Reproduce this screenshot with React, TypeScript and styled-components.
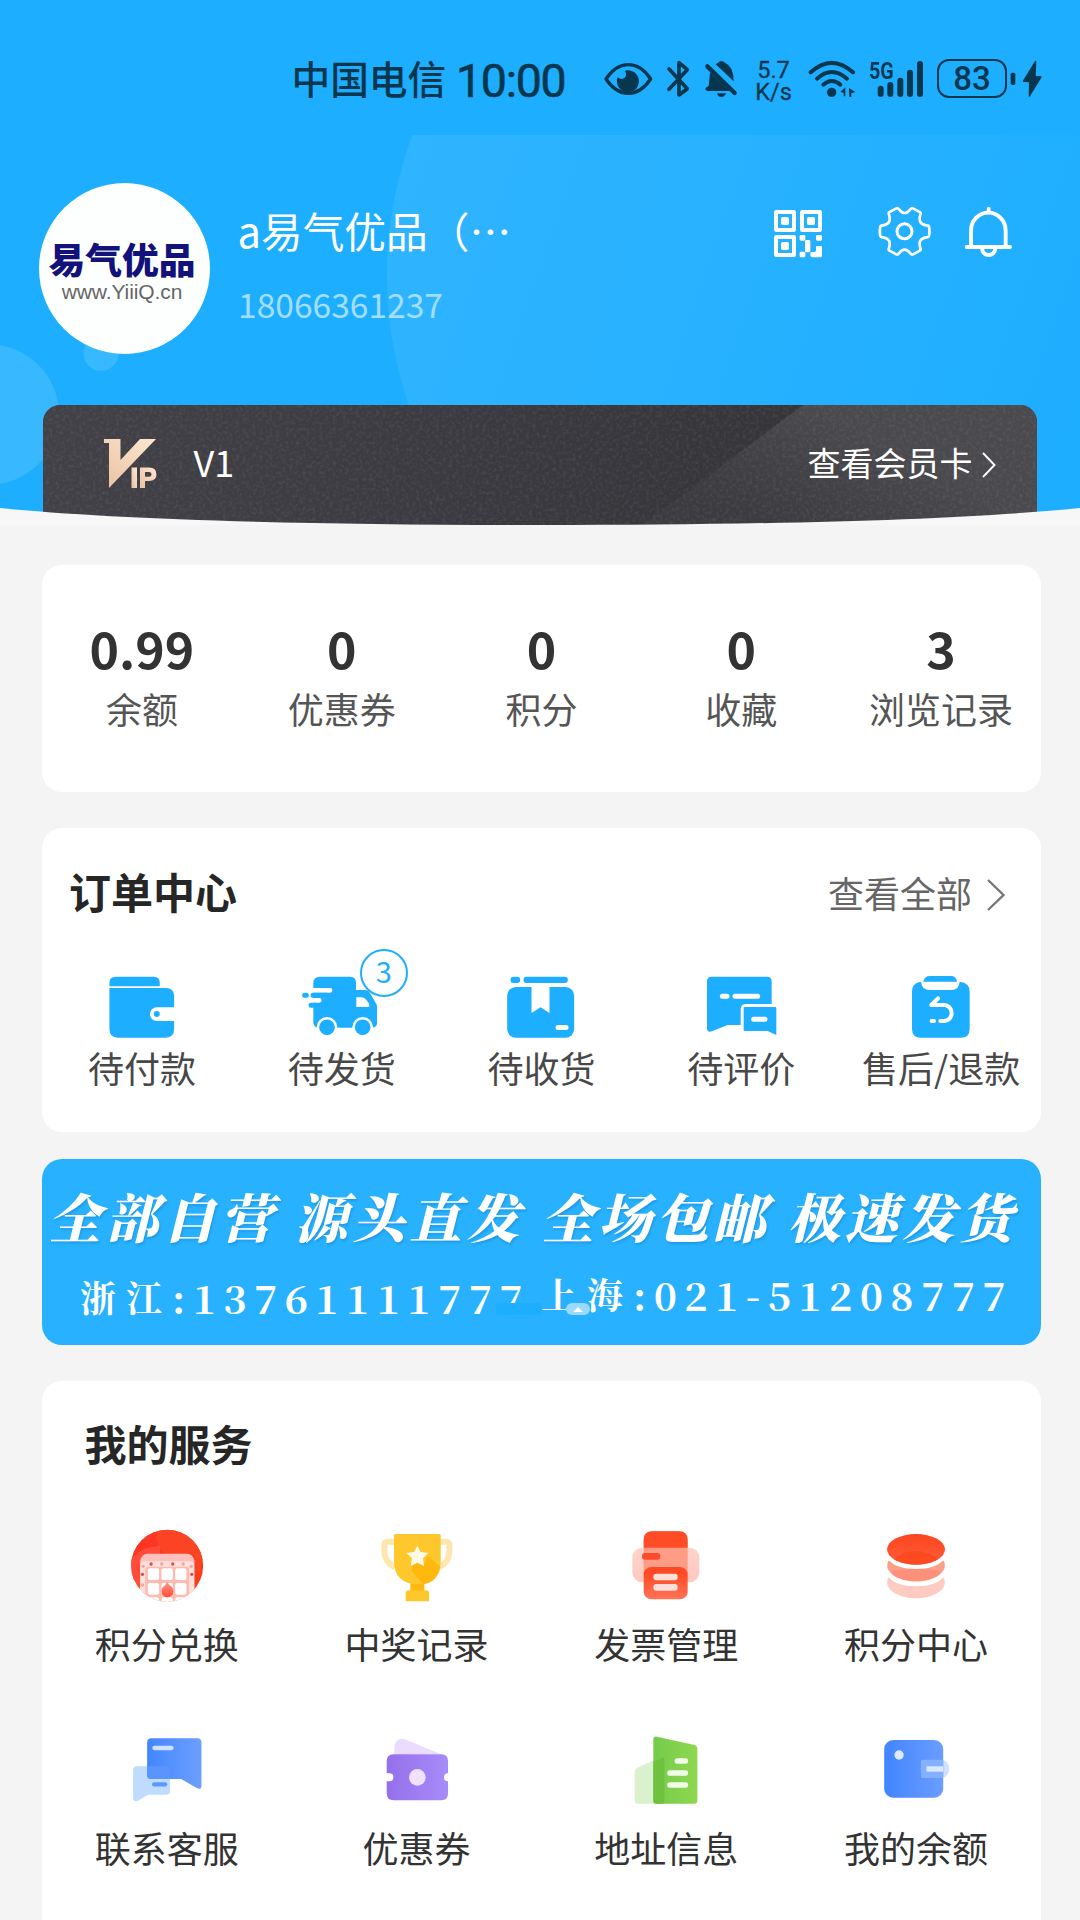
import React from "react";
import styled, { createGlobalStyle } from "styled-components";

const BLUE = "#1eaeff";
const INK = "#07364f";

const GlobalStyle = createGlobalStyle`
  * { box-sizing: border-box; }
  body {
    margin: 0;
    background: #f4f4f4;
    font-family: "Noto Sans CJK SC", "Noto Sans", sans-serif;
  }
`;

const Page = styled.main`
  width: 1080px;
  height: 1920px;
  overflow: hidden;
  background: #f4f4f4;
  display: flex;
  flex-direction: column;
`;

const Header = styled.header`
  position: relative;
  flex: none;
  height: 525px;
  background: ${BLUE};
  display: flex;
  flex-direction: column;
`;

const Backdrop = styled.svg`
  position: absolute;
  left: 0;
  top: 0;
`;

const Curve = styled.svg`
  position: absolute;
  left: 0;
  bottom: 0;
`;

const StatusBar = styled.div`
  position: relative;
  height: 135px;
  padding: 58px 0 0 291.5px;
  display: flex;
  align-items: flex-start;
  color: ${INK};
  white-space: nowrap;
`;

const Glyph = styled.svg<{ $ml?: number }>`
  display: block;
  flex: none;
  margin-left: ${(p) => p.$ml ?? 0}px;
`;

const Carrier = styled.div`
  width: 164.5px;
  margin-top: -4px;
  font-size: 38.7px;
  line-height: 46px;
  font-weight: 500;
`;

const Clock = styled.div`
  width: 147px;
  margin-top: -1px;
  font-family: Roboto, sans-serif;
  font-size: 46.5px;
  line-height: 48px;
  letter-spacing: -1.3px;
  -webkit-text-stroke: 0.6px ${INK};
`;

const Speed = styled.div`
  width: 37px;
  margin-left: 17px;
  padding-top: 1px;
  font-family: Roboto, sans-serif;
  font-size: 23.5px;
  line-height: 22px;
  text-align: center;
  -webkit-text-stroke: 0.3px ${INK};
`;

const Network = styled.div`
  position: relative;
  width: 54px;
  margin-left: 13.5px;
`;

const NetworkKind = styled.span`
  position: absolute;
  left: -0.5px;
  top: 2px;
  font-family: Roboto, sans-serif;
  font-weight: 700;
  font-size: 24px;
  line-height: 22px;
  transform: scaleX(0.82);
  transform-origin: left top;
`;

const Battery = styled.div`
  width: 70px;
  height: 39px;
  margin: 1px 0 0 13.5px;
  border: 2.6px solid ${INK};
  border-radius: 12px;
  font-family: Roboto, sans-serif;
  font-weight: 500;
  font-size: 33px;
  line-height: 36px;
  text-align: center;
`;

const Profile = styled.div`
  position: relative;
  height: 270px;
  padding: 48px 0 0 39px;
  display: flex;
  align-items: flex-start;
`;

const Avatar = styled.div`
  width: 171px;
  height: 171px;
  border-radius: 50%;
  background: #fdffff;
  display: flex;
  flex-direction: column;
  align-items: center;
  padding-top: 53px;
  white-space: nowrap;
`;

const AvatarName = styled.div`
  font-size: 36.8px;
  line-height: 44px;
  font-weight: 900;
  color: #12127a;
  margin-left: -5px;
`;

const AvatarSite = styled.div`
  font-family: "Liberation Sans", sans-serif;
  font-size: 21px;
  line-height: 23px;
  color: #666;
  margin-left: -5px;
  letter-spacing: -0.1px;
`;

const Identity = styled.div`
  width: 534.5px;
  margin-left: 27.5px;
  padding-top: 19px;
`;

const UserName = styled.div`
  font-size: 41.7px;
  line-height: 56px;
  color: #fff;
`;

const Phone = styled.div`
  margin-top: 23.5px;
  padding-left: 0.5px;
  font-size: 33.6px;
  line-height: 44px;
  color: #a3defe;
`;

const Actions = styled.div`
  display: flex;
  margin-left: -0.5px;
  padding-top: 23px;
`;

const VipCard = styled.div`
  position: relative;
  width: 993.5px;
  height: 120px;
  margin-left: 43px;
  padding: 34px 41px 0 60.5px;
  border-radius: 17px 17px 0 0;
  overflow: hidden;
  background: linear-gradient(100deg, #424147 0%, #3c3b41 35%, #36353a 72%);
  display: flex;
  align-items: flex-start;
  color: #fff;
`;

const VipLevel = styled.div`
  position: relative;
  flex: 1;
  margin-left: 36px;
  font-size: 36px;
  line-height: 44px;
`;

const VipLink = styled.div`
  position: relative;
  display: flex;
  align-items: center;
  gap: 9px;
  padding-top: 1px;
  font-size: 33px;
  line-height: 44px;
`;

const Chevron = styled.svg`
  display: block;
  flex: none;
  margin-top: 5px;
`;

const Card = styled.section<{ $height: number; $gap: number }>`
  flex: none;
  width: 999px;
  height: ${(p) => p.$height}px;
  margin: ${(p) => p.$gap}px 0 0 42px;
  border-radius: 20px;
  background: #fff;
`;

const StatRow = styled.div`
  display: grid;
  grid-template-columns: repeat(5, 1fr);
  padding-top: 57px;
  text-align: center;
  white-space: nowrap;
`;

const StatValue = styled.div`
  font-size: 50px;
  line-height: 50px;
  font-weight: 700;
  color: #333;
`;

const StatLabel = styled.div`
  margin-top: 14.5px;
  font-size: 36px;
  line-height: 44px;
  color: #555;
`;

const CardHead = styled.div<{ $left: number; $top: number }>`
  display: flex;
  justify-content: space-between;
  align-items: flex-start;
  padding: ${(p) => p.$top}px 35px 0 ${(p) => p.$left}px;
  height: 90px;
`;

const Title = styled.h2`
  margin: 0;
  font-size: 42px;
  line-height: 56px;
  font-weight: 700;
  color: #262626;
`;

const More = styled.div`
  display: flex;
  align-items: center;
  gap: 14px;
  padding-top: 7px;
  font-size: 36px;
  line-height: 44px;
  color: #666;
`;

const OrderRow = styled.div`
  display: grid;
  grid-template-columns: repeat(5, 1fr);
  margin-top: 52px;
`;

const Entry = styled.div<{ $gap: number; $color: string }>`
  display: flex;
  flex-direction: column;
  align-items: center;
  gap: ${(p) => p.$gap}px;
  font-size: 36px;
  line-height: 44px;
  color: ${(p) => p.$color};
  white-space: nowrap;
`;

const IconBox = styled.div`
  position: relative;
`;

const Badge = styled.span`
  position: absolute;
  left: 58px;
  top: -21px;
  width: 48px;
  height: 48px;
  border: 2px solid ${BLUE};
  border-radius: 50%;
  background: #fff;
  color: ${BLUE};
  font-size: 29px;
  line-height: 39px;
  text-align: center;
`;

const Banner = styled.section`
  position: relative;
  flex: none;
  width: 999px;
  height: 186px;
  margin: 27px 0 0 42px;
  border-radius: 20px;
  background: #27b1fe;
  color: #fff;
  font-family: "Noto Serif CJK SC", "Noto Sans CJK SC", "Liberation Serif", serif;
  font-weight: 700;
  white-space: nowrap;
`;

const Slogans = styled.div`
  display: grid;
  grid-template-columns: repeat(4, 246.5px);
  padding: 24.5px 0 0 6px;
  font-size: 53px;
  line-height: 62px;
  font-weight: 900;
  font-style: italic;
  letter-spacing: 4.3px;
  text-shadow: 1px 2px 2px rgba(20, 110, 190, 0.35);
`;

const Hotlines = styled.div`
  display: flex;
  padding: 18.5px 0 0 38px;
`;

const Hotline = styled.div<{ $width: number; $lift: number }>`
  display: flex;
  width: ${(p) => p.$width}px;
  height: 60px;
  margin-top: ${(p) => p.$lift}px;
  font-size: 36px;
  line-height: 60px;
  letter-spacing: 10px;
`;

const Digits = styled.span`
  font-size: 39.5px;
  font-weight: 700;
  letter-spacing: 7.4px;
`;

const Mask = styled.span`
  position: absolute;
  left: 454px;
  top: 144px;
  width: 46px;
  height: 12px;
  border-radius: 4px;
  background: #1eaeff;
`;

const Pill = styled.span`
  position: absolute;
  left: 524px;
  top: 144px;
  width: 24px;
  height: 12px;
  border-radius: 6px;
  background: #9adafe;
  display: flex;
  align-items: center;
  justify-content: center;
`;

const ServiceGrid = styled.div`
  display: grid;
  grid-template-columns: repeat(4, 1fr);
  grid-auto-rows: 204.7px;
  margin-top: 52.5px;
`;

const EyeIcon = () => (
  <Glyph width="50" height="40" viewBox="970 54 150 120" $ml={0}>
    <path d="M979 117 Q1008 74 1046 74 Q1084 74 1113 117 Q1084 160 1046 160 Q1008 160 979 117Z" fill="none" stroke={INK} strokeWidth="10" strokeLinejoin="round" />
    <path d="M1036 92 A33 33 0 1 1 1014 112 Q1024 121 1034 114 Q1043 106 1036 92Z" fill={INK} />
  </Glyph>
);

const BluetoothIcon = () => (
  <Glyph width="26" height="40" viewBox="-42 54 78 120" $ml={13}>
    <path d="M-33 87 L22 146 L-3 165 V68 L22 89 L-33 148" fill="none" stroke={INK} strokeWidth="11" strokeLinecap="round" strokeLinejoin="round" />
  </Glyph>
);

const MutedBellIcon = () => (
  <Glyph width="34" height="40" viewBox="74 54 102 120" $ml={12}>
    <path d="M92 96 L152 153 H84 Q77 152 78 145 L88 137 Q91 115 92 96Z" fill={INK} />
    <path d="M109 73 Q113 70 116 68 Q126 58 137 68 Q164 80 163 124Z" fill={INK} />
    <path d="M113 160 H140 Q137 171 126 171 Q116 171 113 160Z" fill={INK} />
    <path d="M84 79 L166 159" stroke={INK} strokeWidth="13" strokeLinecap="round" />
  </Glyph>
);

const WifiIcon = () => (
  <Glyph width="48" height="40" viewBox="386 54 144 120" $ml={16}>
    <g fill="none" stroke={INK} strokeWidth="12" strokeLinecap="round">
      <path d="M394 97 Q457 40 521 97" />
      <path d="M413 116 Q457 76 503 116" />
      <path d="M432 134 Q457 112 483 134" />
    </g>
    <circle cx="457" cy="157" r="14" fill={INK} />
    <path d="M483 156 L498 142 V169 H493 V158Z M509 144 L528 156 L516 160 V171 H510Z" fill={INK} />
  </Glyph>
);

const SignalIcon = () => (
  <Glyph width="54" height="40" viewBox="571 54 162 120">
    <g stroke={INK} strokeWidth="18" strokeLinecap="round">
      <path d="M603 146V162M632 135V162M662 122V162M691 98V162M721 72V162" />
    </g>
  </Glyph>
);

const BatteryTail = () => (
  <Glyph width="34" height="40" viewBox="988 54 102 120" $ml={1.5}>
    <rect x="993" y="98" width="14" height="37" rx="5" fill={INK} />
    <path d="M1066 63 Q1070 61 1070 66 L1068 108 L1083 108 Q1088 109 1085 113 L1051 169 Q1047 173 1047 167 L1048 127 L1032 126 Q1027 124 1031 120Z" fill={INK} />
  </Glyph>
);

const QrIcon = () => (
  <Glyph width="52" height="52" viewBox="636 258 156 156">
    <g fill="none" stroke="#fff" strokeWidth="12">
      <rect x="648" y="276" width="54" height="54" rx="1" />
      <rect x="726" y="276" width="54" height="54" rx="1" />
      <rect x="648" y="351" width="54" height="54" rx="1" />
    </g>
    <g fill="#fff">
      <rect x="663" y="291" width="24" height="24" rx="5" />
      <rect x="741" y="291" width="24" height="24" rx="5" />
      <rect x="663" y="366" width="24" height="24" rx="5" />
      <rect x="719" y="345" width="17" height="17" rx="4" />
      <rect x="768" y="345" width="18" height="17" rx="4" />
      <rect x="735" y="360" width="16" height="37" rx="4" />
      <rect x="719" y="395" width="17" height="17" rx="4" />
      <path d="M771 378H783Q786 378 786 381V408Q786 412 782 412H757Q751 412 751 405V399Q751 396 755 396H764Q768 396 768 391V382Q768 378 771 378Z" />
    </g>
  </Glyph>
);

const GearIcon = () => (
  <Glyph width="54" height="52" viewBox="954 258 162 156" $ml={54}>
    <g fill="none" stroke="#fff" strokeWidth="8" strokeLinejoin="round">
      <path d="M1009 265 Q1013 263 1017 268 Q1034 290 1051 268 Q1055 263 1059 265 L1081 277 Q1083 279 1081 284 Q1072 312 1099 316 Q1106 316 1107 320 Q1110 334 1107 348 Q1106 352 1099 352 Q1072 356 1081 384 Q1083 389 1081 391 L1059 403 Q1055 405 1051 400 Q1034 378 1017 400 Q1013 405 1009 403 L987 391 Q985 389 987 384 Q996 356 969 352 Q962 352 961 348 Q958 334 961 320 Q962 316 969 316 Q996 312 987 284 Q985 279 987 277Z" />
      <circle cx="1033.500" cy="334" r="22.500" strokeWidth="9" />
    </g>
  </Glyph>
);

const BellIcon = () => (
  <Glyph width="50" height="52" viewBox="1210 258 150 156" $ml={31.3}>
    <g fill="none" stroke="#fff" strokeWidth="11.500" strokeLinecap="round">
      <path d="M1287 266V276" />
      <path d="M1234 379V332A52 54 0 0 1 1338 332V379" />
      <path d="M1221 381H1351" />
      <path d="M1267 385A20 20 0 0 0 1307 385" />
    </g>
  </Glyph>
);

const VipMark = styled(Glyph)`
  position: relative;
`;

const VipLogo = () => (
  <VipMark width="54" height="50" viewBox="0 0 54 50">
    <defs>
      <linearGradient id="vip" x1="0" y1="1" x2="1" y2="0">
        <stop offset="0" stopColor="#e9c2a3" />
        <stop offset="1" stopColor="#ffe6d0" />
      </linearGradient>
    </defs>
    <g fill="url(#vip)">
      <path d="M0 0H16.500V21L36 0H52L5 49V4H0Z" />
      <path d="M27.500 28.500H33V49H27.500Z" />
      <path fillRule="evenodd" d="M36 28.500H45Q52.500 28.500 52.500 35.500Q52.500 42 45 42H41V49H36ZM41 33V37.800H45Q47.500 37.800 47.500 35.500Q47.500 33 45 33Z" />
    </g>
  </VipMark>
);

const WalletIcon = () => (
  <Glyph width="80" height="70" viewBox="185.700 90 240 210">
    <path d="M208 139V129Q208 110 227 110H341Q359 110 359 128V139Z" fill={BLUE} />
    <path d="M208 144H377Q402 144 402 169V202H350A20.500 20.500 0 0 0 350 243H402V268Q402 293 377 293H233Q208 293 208 268Z" fill={BLUE} />
    <circle cx="350" cy="222" r="9" fill={BLUE} />
  </Glyph>
);

const TruckIcon = () => (
  <Glyph width="80" height="70" viewBox="785 90 240 210">
    <path d="M819 130Q819 110 838 110H930Q947 110 947 128V150H976Q984 150 989 159L1005 187Q1010 194 1010 201V250Q1010 262 996 263H830Q819 258 819 246Z" fill={BLUE} />
    <path d="M948 172H964Q975 172 985 190Q989 198 985 201H948Z" fill="#fff" />
    <g strokeLinecap="round" fill="none">
      <path d="M816 151H869M816 181H837" stroke="#fff" strokeWidth="14" />
      <path d="M818 166H860M812 196H825M793 166H798" stroke={BLUE} strokeWidth="15" />
    </g>
    <circle cx="860" cy="262" r="31" fill="#fff" />
    <circle cx="967" cy="262" r="31" fill="#fff" />
    <path d="M820 264H1015V300H820Z" fill="#fff" />
    <circle cx="860" cy="262" r="23.500" fill={BLUE} />
    <circle cx="967" cy="262" r="23.500" fill={BLUE} />
  </Glyph>
);

const ParcelIcon = () => (
  <Glyph width="80" height="70" viewBox="-115.500 90 240 210">
    <g fill={BLUE}>
      <rect x="-87" y="110" width="29" height="19" rx="9" />
      <rect x="-48" y="110" width="133" height="19" rx="9" />
      <rect x="-97" y="141" width="201" height="152" rx="26" />
    </g>
    <path d="M-24 140H30V219L3 202L-24 219Z" fill="#fff" />
    <rect x="48" y="255" width="39" height="15" rx="7.500" fill="#fff" />
  </Glyph>
);

const ReviewIcon = () => (
  <Glyph width="80" height="70" viewBox="484 90 240 210">
    <path d="M502 124Q502 110 516 110H682Q696 110 696 124V192H620Q603 192 603 208V255H565Q561 255 558 257L517 274Q502 279 502 264Z" fill={BLUE} />
    <path d="M612 205Q612 201 616 201H706Q710 201 710 205V285L684 273H616Q612 273 612 269Z" fill={BLUE} />
    <path d="M548 169H562M586 169H654M642 238H676" stroke="#fff" strokeWidth="15" strokeLinecap="round" />
  </Glyph>
);

const RefundIcon = () => (
  <Glyph width="80" height="70" viewBox="1083 90 240 210">
    <path d="M1143 125Q1145 150 1169 150H1234Q1257 150 1259 125Q1289 128 1289 155V266Q1289 293 1262 293H1143Q1116 293 1116 266V155Q1116 128 1143 125Z" fill={BLUE} />
    <path d="M1150 125Q1153 108 1170 108H1232Q1249 108 1251 125Z" fill={BLUE} />
    <path d="M1194 175L1174 195H1213A22 24 0 0 1 1213 243H1201M1175 243H1182" fill="none" stroke="#fff" strokeWidth="12" strokeLinecap="round" strokeLinejoin="round" />
  </Glyph>
);

const ExchangeIcon = () => (
  <Glyph width="80" height="80" viewBox="200.600 70 240 240">
    <defs>
      <clipPath id="disc"><circle cx="321" cy="195" r="108" /></clipPath>
      <linearGradient id="drop" x1="0" y1="0" x2="0" y2="1">
        <stop offset="0" stopColor="#ff9a8a" /><stop offset="1" stopColor="#ff4a35" />
      </linearGradient>
      <linearGradient id="discFill"><stop offset="0" stopColor="#ff5140" /><stop offset="1" stopColor="#f93b14" /></linearGradient>
    </defs>
    <g clipPath="url(#disc)">
      <rect x="213" y="87" width="216" height="216" fill="url(#discFill)" />
      <path d="M288 80Q288 140 320 162L420 220L440 80Z" fill="#fa4423" />
      <path d="M288 80Q284 136 322 170L213 190V80Z" fill="#fd3524" />
      <path d="M210 180Q240 138 300 135V170L210 250Z" fill="#ff4b3a" />
      <path d="M240 180Q245 159 262 159H381Q397 159 403 180V310H240Z" fill="#fec0bd" />
      <path d="M240 195Q240 182 253 182H389Q402 182 402 195V310H240Z" fill="#ffe0dc" />
      <rect x="255" y="198" width="132" height="120" rx="9" fill="#fdbbb2" />
      <g fill="#fff">
        {[263, 304, 345].map((x) => [203, 247, 290].map((y) => <rect key={`${x}-${y}`} x={x} y={y} width="34" height="35" rx="7" />))}
      </g>
      <path d="M321 243Q326 253 335 259A18 18 0 1 1 309 259Q317 253 321 243Z" fill="url(#drop)" />
      <g fill="#e04a44">
        <circle cx="273" cy="190" r="5" /><circle cx="338" cy="190" r="5" />
        <circle cx="247" cy="221" r="5" /><circle cx="395" cy="221" r="5" />
      </g>
      <g fill="#f6a39e">
        <circle cx="305" cy="190" r="5" /><circle cx="369" cy="190" r="5" /><circle cx="249" cy="197" r="5" />
        <circle cx="393" cy="197" r="5" /><circle cx="247" cy="253" r="5" />
      </g>
    </g>
  </Glyph>
);

const TrophyIcon = () => (
  <Glyph width="80" height="80" viewBox="949.900 70 240 240">
    <path d="M1004 123H981Q972 123 972 134V151Q972 184 1004 200M1137 123H1158Q1167 123 1167 134V151Q1167 184 1137 200" fill="none" stroke="#ffe6ae" strokeWidth="18" />
    <path d="M1050 240H1092V275H1050Z" fill="#ffb90e" />
    <path d="M1001 105Q1001 100 1006 100H1136Q1141 100 1141 105V180Q1141 248 1071 251Q1001 248 1001 180Z" fill="#fec72c" />
    <path d="M1101 165L1140 198Q1130 249 1082 251H1089L1054 212L1060 190L1070 183L1090 194Z" fill="#ffb90e" />
    <path d="M1036 278Q1036 269 1045 269H1097Q1106 269 1106 278V302H1036Z" fill="#fec72c" />
    <path d="M1071 135L1081 154L1104 157L1088 173L1091 196L1071 186L1051 196L1055 173L1038 157L1061 154Z" fill="#fffbe9" />
  </Glyph>
);

const InvoiceIcon = () => (
  <Glyph width="80" height="80" viewBox="259 70 240 240">
    <defs>
      <linearGradient id="inv" x1="0" y1="0" x2="0" y2="1"><stop offset="0.200" stopColor="#fe4a24" /><stop offset="1" stopColor="#ff7357" /></linearGradient>
      <linearGradient id="invSide" x1="0" y1="0" x2="0" y2="1"><stop offset="0" stopColor="#ffd3cb" /><stop offset="1" stopColor="#ffc9c0" /></linearGradient>
    </defs>
    <rect x="278" y="141" width="201" height="104" rx="30" fill="url(#invSide)" />
    <path d="M312 220V118Q312 92 338 92H418Q444 92 444 118V220Z" fill="#ff9c86" />
    <path d="M312 141V118Q312 92 338 92H418Q444 92 444 118V141Z" fill="#fe4d26" />
    <rect x="307" y="157" width="55" height="20" rx="9" fill="#fb4b2b" />
    <rect x="312" y="199" width="132" height="97" rx="23" fill="url(#inv)" />
    <rect x="341" y="219" width="73" height="20" rx="9" fill="#ffdfda" />
    <rect x="341" y="250" width="73" height="20" rx="9" fill="#ffdfda" />
  </Glyph>
);

const CoinsIcon = () => (
  <Glyph width="80" height="80" viewBox="1008.400 70 240 240">
    <defs>
      <linearGradient id="coin" x1="0" y1="0" x2="0" y2="1"><stop offset="0" stopColor="#fb461d" /><stop offset="1" stopColor="#ff5d3b" /></linearGradient>
    </defs>
    <path d="M1047 230Q1070 257 1128.500 257T1210 230Q1216 238 1215 247C1213 272 1175 293 1128.500 293S1044 272 1042 247Q1041 238 1047 230Z" fill="#fdcbc1" />
    <path d="M1047 179Q1070 205 1128.500 205T1210 179Q1216 187 1215 197C1213 221 1175 242 1128.500 242S1044 221 1042 197Q1041 187 1047 179Z" fill="#fd9e89" />
    <path d="M1064 210Q1090 205 1128.500 205T1193 210Q1213 212 1190 228Q1165 242 1128.500 242T1067 228Q1044 212 1064 210Z" fill="#fb8a74" opacity="0.700" />
    <ellipse cx="1128.500" cy="146" rx="87" ry="46" fill="url(#coin)" />
    <path d="M1062 176Q1128 126 1195 176Q1128 208 1062 176Z" fill="#fb461d" opacity="0.800" />
  </Glyph>
);

const SupportIcon = () => (
  <Glyph width="80" height="80" viewBox="200.600 684 240 240">
    <defs>
      <linearGradient id="chat"><stop offset="0" stopColor="#4285ff" /><stop offset="1" stopColor="#6da0ff" /></linearGradient>
    </defs>
    <path d="M219 810Q219 799 230 799H330V874Q330 884 319 884H264L234 902Q219 908 219 893Z" fill="#bfdcff" />
    <path d="M261 728Q261 715 274 715H411Q424 715 424 728V857Q424 870 411 865L363 837H274Q261 837 261 824Z" fill="url(#chat)" />
    <path d="M261 799H320Q330 799 330 810V837H274Q261 837 261 824Z" fill="#5995fd" />
    <path d="M283 744H334" stroke="#cfe2ff" strokeWidth="13" strokeLinecap="round" />
    <path d="M282 853H315" stroke="#5c98fc" strokeWidth="13" strokeLinecap="round" />
  </Glyph>
);

const CouponIcon = () => (
  <Glyph width="80" height="80" viewBox="949.900 684 240 240">
    <defs>
      <linearGradient id="coupon"><stop offset="0" stopColor="#9470e9" /><stop offset="1" stopColor="#a88bfa" /></linearGradient>
    </defs>
    <path d="M1002 763V742Q1004 712 1035 718L1141 763Z" fill="#ebdbff" />
    <path d="M979 784Q979 763 1000 763H1143Q1163 763 1163 784V820A12 12 0 0 0 1163 844V880Q1163 901 1143 901H1000Q979 901 979 880V844H987A12 12 0 0 0 987 820H979Z" fill="url(#coupon)" />
    <circle cx="1071" cy="832" r="25" fill="#f0e2ff" />
  </Glyph>
);

const AddressIcon = () => (
  <Glyph width="80" height="80" viewBox="259 684 240 240">
    <defs>
      <linearGradient id="bld"><stop offset="0" stopColor="#75ca4c" /><stop offset="1" stopColor="#8ed84f" /></linearGradient>
    </defs>
    <path d="M285 815Q285 807 293 803L345 780V911H294Q285 911 285 902Z" fill="#d9f1cc" />
    <path d="M341 719Q341 708 352 710L465 735Q473 737 473 745V902Q473 911 464 911H350Q341 911 341 902Z" fill="url(#bld)" />
    <path d="M341 785L374 772V903Q374 911 366 911H350Q341 911 341 902Z" fill="#6fc13e" />
    <path d="M413 783H437M391 819H437M391 855H437" stroke="#f1fbe9" strokeWidth="17" strokeLinecap="round" />
  </Glyph>
);

const BalanceIcon = () => (
  <Glyph width="80" height="80" viewBox="1008.400 684 240 240">
    <defs>
      <linearGradient id="bal"><stop offset="0" stopColor="#4285ff" /><stop offset="1" stopColor="#6a9dff" /></linearGradient>
    </defs>
    <path d="M1205 779Q1228 782 1228 806Q1228 831 1205 834Z" fill="#cfe1fd" />
    <rect x="1033" y="720" width="177" height="173" rx="27" fill="url(#bal)" />
    <path d="M1143 785Q1143 779 1149 779H1210V834H1149Q1143 834 1143 828Z" fill="#84b1ff" />
    <rect x="1160" y="799" width="50" height="16" fill="#dbe9ff" />
    <circle cx="1077.500" cy="765" r="14" fill="#dfeafe" />
  </Glyph>
);

const stats = [
  ["0.99", "余额"],
  ["0", "优惠券"],
  ["0", "积分"],
  ["0", "收藏"],
  ["3", "浏览记录"],
];

const orders = [
  { label: "待付款", Icon: WalletIcon },
  { label: "待发货", Icon: TruckIcon, count: 3 },
  { label: "待收货", Icon: ParcelIcon },
  { label: "待评价", Icon: ReviewIcon },
  { label: "售后/退款", Icon: RefundIcon },
];

const services = [
  { label: "积分兑换", Icon: ExchangeIcon },
  { label: "中奖记录", Icon: TrophyIcon },
  { label: "发票管理", Icon: InvoiceIcon },
  { label: "积分中心", Icon: CoinsIcon },
  { label: "联系客服", Icon: SupportIcon },
  { label: "优惠券", Icon: CouponIcon },
  { label: "地址信息", Icon: AddressIcon },
  { label: "我的余额", Icon: BalanceIcon },
];

export default function App() {
  return (
    <Page>
      <GlobalStyle />
      <Header>
        <Backdrop width="1080" height="525" viewBox="0 0 1080 525">
          <defs>
            <linearGradient id="halo" x1="400" y1="200" x2="1090" y2="440" gradientUnits="userSpaceOnUse">
              <stop offset="0" stopColor="#fff" stopOpacity="0.075" />
              <stop offset="1" stopColor="#fff" stopOpacity="0" />
            </linearGradient>
            <clipPath id="below"><rect x="0" y="135" width="1080" height="390" /></clipPath>
          </defs>
          <circle cx="787" cy="275" r="400" fill="url(#halo)" clipPath="url(#below)" />
          <circle cx="-11" cy="414.500" r="70" fill="#38b8ff" />
          <circle cx="101" cy="353.500" r="17.500" fill="#38b8ff" />
        </Backdrop>
        <StatusBar>
          <Carrier>中国电信</Carrier>
          <Clock>10:00</Clock>
          <EyeIcon />
          <BluetoothIcon />
          <MutedBellIcon />
          <Speed>5.7<br />K/s</Speed>
          <WifiIcon />
          <Network>
            <NetworkKind>5G</NetworkKind>
            <SignalIcon />
          </Network>
          <Battery>83</Battery>
          <BatteryTail />
        </StatusBar>
        <Profile>
          <Avatar>
            <AvatarName>易气优品</AvatarName>
            <AvatarSite>www.YiiiQ.cn</AvatarSite>
          </Avatar>
          <Identity>
            <UserName>a易气优品（…</UserName>
            <Phone>18066361237</Phone>
          </Identity>
          <Actions>
            <QrIcon />
            <GearIcon />
            <BellIcon />
          </Actions>
        </Profile>
        <VipCard>
          <Backdrop width="994" height="120" viewBox="0 0 994 120">
            <defs>
              <linearGradient id="facet" x1="760" y1="0" x2="700" y2="120" gradientUnits="userSpaceOnUse">
                <stop offset="0" stopColor="#4a494d" />
                <stop offset="1" stopColor="#46454a" stopOpacity="0.300" />
              </linearGradient>
              <filter id="grain">
                <feTurbulence type="fractalNoise" baseFrequency="0.300" numOctaves="2" seed="4" />
                <feColorMatrix values="0 0 0 0 1  0 0 0 0 1  0 0 0 0 1  0.500 0 0 0 -0.210" />
              </filter>
            </defs>
            <path d="M760 0H994V120H600Z" fill="url(#facet)" />
            <rect width="994" height="120" filter="url(#grain)" opacity="0.350" />
          </Backdrop>
          <VipLogo />
          <VipLevel>V1</VipLevel>
          <VipLink>
            查看会员卡
            <Chevron width="14" height="26" viewBox="0 0 14 26">
              <path d="M1 1L12.500 13L1 25" fill="none" stroke="#fff" strokeWidth="1.900" />
            </Chevron>
          </VipLink>
        </VipCard>
        <Curve width="1080" height="17" viewBox="0 0 1080 17">
          <path d="M0 0C110 11 290 17 540 17S970 11 1080 0V17H0Z" fill="#f7f7f7" />
        </Curve>
      </Header>

      <Card $height={227} $gap={39.5}>
        <StatRow>
          {stats.map(([value, label]) => (
            <div key={label}>
              <StatValue>{value}</StatValue>
              <StatLabel>{label}</StatLabel>
            </div>
          ))}
        </StatRow>
      </Card>

      <Card $height={304} $gap={36.5}>
        <CardHead $left={27} $top={35}>
          <Title>订单中心</Title>
          <More>
            查看全部
            <Chevron width="20" height="32" viewBox="0 0 20 32">
              <path d="M2 1L17.500 16L2 31" fill="none" stroke="#777" strokeWidth="2.400" />
            </Chevron>
          </More>
        </CardHead>
        <OrderRow>
          {orders.map(({ label, Icon, count }) => (
            <Entry key={label} $gap={4.7} $color="#484848">
              <IconBox>
                <Icon />
                {count ? <Badge>{count}</Badge> : null}
              </IconBox>
              {label}
            </Entry>
          ))}
        </OrderRow>
      </Card>

      <Banner>
        <Slogans>
          <span>全部自营</span>
          <span>源头直发</span>
          <span>全场包邮</span>
          <span>极速发货</span>
        </Slogans>
        <Hotlines>
          <Hotline $width={461} $lift={3}>浙江<Digits>:13761111777</Digits></Hotline>
          <Hotline $width={480} $lift={0}>上海<Digits>:021-51208777</Digits></Hotline>
        </Hotlines>
        <Mask />
        <Pill>
          <svg width="10" height="5" viewBox="0 0 10 5"><path d="M0 5L5 0L10 5Z" fill="#fff" /></svg>
        </Pill>
      </Banner>

      <Card $height={600} $gap={36}>
        <CardHead $left={42.5} $top={34}>
          <Title>我的服务</Title>
        </CardHead>
        <ServiceGrid>
          {services.map(({ label, Icon }) => (
            <Entry key={label} $gap={17.2} $color="#333">
              <Icon />
              {label}
            </Entry>
          ))}
        </ServiceGrid>
      </Card>
    </Page>
  );
}
